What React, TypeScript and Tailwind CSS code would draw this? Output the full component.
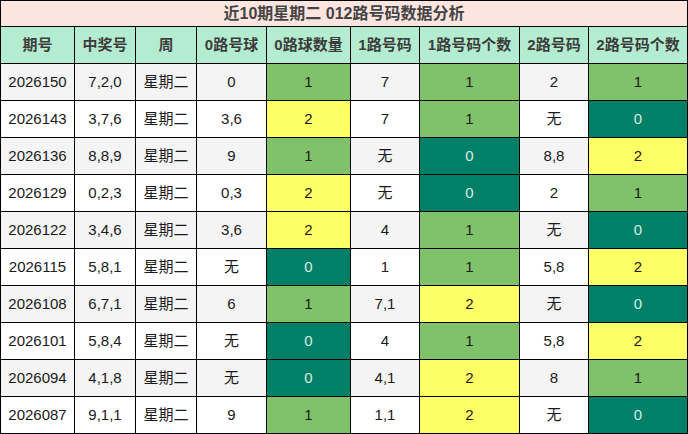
const HEAD = ['期号', '中奖号', '周', '0路号球', '0路球数量', '1路号码', '1路号码个数', '2路号码', '2路号码个数'];

const ROWS: [string, string, string, number, string, number, string, number][] = [
  ['2026150', '7,2,0', '0', 1, '7', 1, '2', 1],
  ['2026143', '3,7,6', '3,6', 2, '7', 1, '无', 0],
  ['2026136', '8,8,9', '9', 1, '无', 0, '8,8', 2],
  ['2026129', '0,2,3', '0,3', 2, '无', 0, '2', 1],
  ['2026122', '3,4,6', '3,6', 2, '4', 1, '无', 0],
  ['2026115', '5,8,1', '无', 0, '1', 1, '5,8', 2],
  ['2026108', '6,7,1', '6', 1, '7,1', 2, '无', 0],
  ['2026101', '5,8,4', '无', 0, '4', 1, '5,8', 2],
  ['2026094', '4,1,8', '无', 0, '4,1', 2, '8', 1],
  ['2026087', '9,1,1', '9', 1, '1,1', 2, '无', 0],
];

function countCls(n: number) {
  if (n === 0) return 'bg-[#008066] text-[#d6ece4]';
  if (n === 1) return 'bg-[#80c269] text-[#1a1a1a]';
  return 'bg-[#ffff66] text-[#1a1a1a]';
}

export default function App() {
  return (
    <div
      className="w-[688px] h-[434px] bg-black p-px grid gap-px grid-cols-[73px_60px_60px_69px_83px_68px_99px_68px_98px] grid-rows-[25px_36px_repeat(10,36px)] text-[15px]"
      style={{ fontFamily: '"Liberation Sans", "Noto Sans CJK SC", sans-serif' }}
    >
      {/* title */}
      <div className="col-span-9 bg-[#fde5df] flex items-center justify-center font-bold text-[16px] text-[#444]">
        近10期星期二 012路号码数据分析
      </div>

      {/* header */}
      {HEAD.map((h) => (
        <div key={h} className="bg-[#b3ecd0] flex items-center justify-center font-bold text-[#3c3c3c]">
          {h}
        </div>
      ))}

      {ROWS.map((r, i) => {
        const base = i % 2 === 0 ? 'bg-[#f4f4f4]' : 'bg-white';
        const plain = `${base} flex items-center justify-center text-[#1a1a1a]`;
        const colored = 'flex items-center justify-center';
        return [
          <div key={`${i}a`} className={plain}>{r[0]}</div>,
          <div key={`${i}b`} className={plain}>{r[1]}</div>,
          <div key={`${i}c`} className={plain}>星期二</div>,
          <div key={`${i}d`} className={plain}>{r[2]}</div>,
          <div key={`${i}e`} className={`${colored} ${countCls(r[3])}`}>{r[3]}</div>,
          <div key={`${i}f`} className={plain}>{r[4]}</div>,
          <div key={`${i}g`} className={`${colored} ${countCls(r[5])}`}>{r[5]}</div>,
          <div key={`${i}h`} className={plain}>{r[6]}</div>,
          <div key={`${i}i`} className={`${colored} ${countCls(r[7])}`}>{r[7]}</div>,
        ];
      })}
    </div>
  );
}
